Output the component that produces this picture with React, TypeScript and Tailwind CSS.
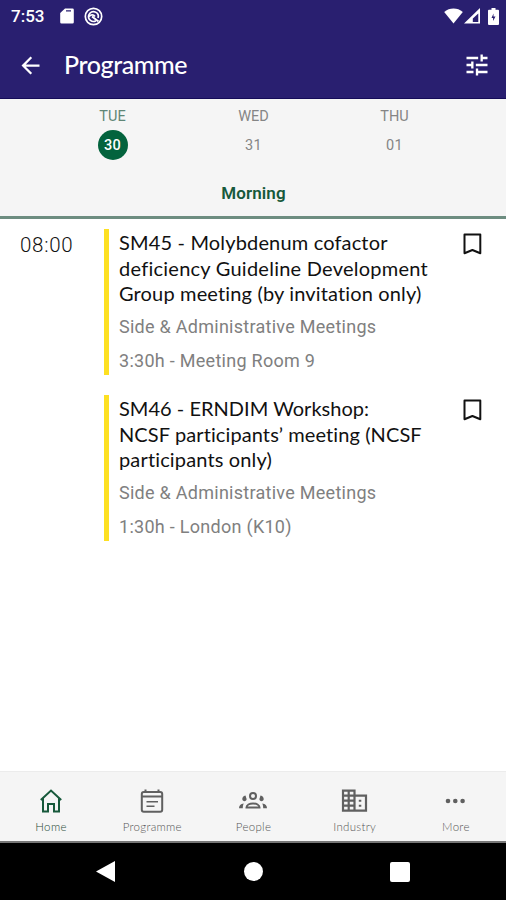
import type { ReactNode } from "react";
import { MdArrowBack, MdTune } from "react-icons/md";

type TitleLine = { text: string; className: string };

const days = [
  { name: "TUE", date: "30", active: true },
  { name: "WED", date: "31", active: false },
  { name: "THU", date: "01", active: false },
];

const sessions: { lines: TitleLine[]; category: string; place: string }[] = [
  {
    lines: [
      { text: "SM45 - Molybdenum cofactor", className: "tracking-[0.160px]" },
      { text: "deficiency Guideline Development", className: "tracking-[0.250px]" },
      { text: "Group meeting (by invitation only)", className: "tracking-[0.150px]" },
    ],
    category: "Side & Administrative Meetings",
    place: "3:30h - Meeting Room 9",
  },
  {
    lines: [
      { text: "SM46 - ERNDIM Workshop:", className: "tracking-[0.020px]" },
      { text: "NCSF participants’ meeting (NCSF", className: "tracking-[0.100px]" },
      { text: "participants only)", className: "tracking-[0.150px]" },
    ],
    category: "Side & Administrative Meetings",
    place: "1:30h - London (K10)",
  },
];

const tabs: { label: string; icon: ReactNode; active?: boolean }[] = [
  {
    label: "Home",
    active: true,
    icon: (
      <path
        strokeWidth="2"
        d="M3.800 13 14 3.500 24.200 13M6 11.500v13h5V17h6v7.500h5v-13"
      />
    ),
  },
  {
    label: "Programme",
    icon: (
      <>
        <rect x="3.800" y="5" width="20.400" height="19.800" rx="2" strokeWidth="2" />
        <path strokeWidth="2" d="M7.500 2.500V5M20.500 2.500V5M4 9.500h20" />
        <path strokeWidth="1.600" d="M8.500 14.800h11.500M8.500 19.300h8" />
      </>
    ),
  },
  {
    label: "People",
    icon: (
      <>
        <circle cx="14" cy="9" r="3" strokeWidth="2" />
        <path strokeWidth="2" d="M7.500 20.500c0-2.500 3-4 6.500-4s6.500 1.500 6.500 4z" />
        <path
          fill="currentColor"
          stroke="none"
          d="M6.500 8.500C4 9 3.300 10.500 3.300 12c0 1.300 1 2.200 2.200 2.200S7.600 13.300 7.600 12zM21.500 8.500c2.500.5 3.200 2 3.200 3.500 0 1.300-1 2.200-2.200 2.200s-2.100-.9-2.100-2.200zM0 21.300c0-2.500 1.500-4.300 4.800-4.700-.8 1.500-1 2.800-1 4.700zM28 21.300c0-2.500-1.500-4.300-4.800-4.700.8 1.500 1 2.800 1 4.700z"
        />
      </>
    ),
  },
  {
    label: "Industry",
    icon: (
      <>
        <path
          strokeWidth="2.200"
          d="M3 3.700h11.500v20H3zM14.500 8.700H26v15H14.500M3 8.700h11.500M3 13.700h11.500M3 18.700h11.500M8.700 3.700v20"
        />
        <path strokeWidth="2" d="M18.800 13.700h2.500M18.800 18.700h2.500" />
      </>
    ),
  },
  {
    label: "More",
    icon: (
      <g fill="currentColor" stroke="none">
        <circle cx="7" cy="14" r="2.300" />
        <circle cx="14.300" cy="14" r="2.300" />
        <circle cx="21.600" cy="14" r="2.300" />
      </g>
    ),
  },
];

function StatusBar() {
  return (
    <div className="flex h-8 items-center pl-[11px] pr-[7px]">
      <span className="w-[49px] text-[17px] font-medium leading-none">7:53</span>
      <svg className="h-4 w-[14px]" viewBox="0 0 14 16" aria-hidden>
        <path
          fill="currentColor"
          fillRule="evenodd"
          d="M5 .5h7.500a1.300 1.300 0 0 1 1.300 1.300v12.400a1.300 1.300 0 0 1-1.300 1.300h-11A1.300 1.300 0 0 1 .2 14.200V5zM6 2.200v1.300h5V2.200z"
        />
      </svg>
      <svg
        className="ml-[10px] h-[19px] w-[19px]"
        viewBox="0 0 19 19"
        fill="none"
        stroke="currentColor"
        aria-hidden
      >
        <circle cx="9.500" cy="9.500" r="8.200" strokeWidth="1.700" />
        <path strokeWidth="1.700" d="M12 13.700A4.900 4.900 0 0 1 4.800 8c1-3 4-4.200 6.500-3 2.500 1 3.500 3.500 2.700 6" />
        <path strokeWidth="1.900" d="M5 9.500C7 7.300 9.500 7.500 11 9.500M8 9.500l6.500 5" />
      </svg>
      <div className="ml-auto flex items-center">
        <svg className="h-4 w-[19px]" viewBox="0 0 19 16" aria-hidden>
          <path fill="currentColor" d="M.2 4C5.500-.6 13.500-.6 18.800 4L9.500 15.500z" />
        </svg>
        <svg className="ml-px h-4 w-4" viewBox="0 0 16 16" aria-hidden>
          <path
            fill="currentColor"
            fillRule="evenodd"
            d="M0 15.500 16 0v15.500zM8.800 14h5.500V5.500L8.800 10.500z"
          />
        </svg>
        <svg className="ml-2 h-[17px] w-[11px]" viewBox="0 0 11 17" aria-hidden>
          <path
            fill="currentColor"
            fillRule="evenodd"
            d="M3.500 0h4v1.800H10a1 1 0 0 1 1 1V16a1 1 0 0 1-1 1H1a1 1 0 0 1-1-1V2.800a1 1 0 0 1 1-1h2.500zM5.500 5.500 3.500 10h1.600v3l2.400-4.500H5.500z"
          />
        </svg>
      </div>
    </div>
  );
}

export default function App() {
  return (
    <div className="flex h-[900px] w-[506px] flex-col overflow-hidden bg-white font-['Roboto',sans-serif]">
      <header className="h-[99px] shrink-0 border-b border-[#150c58] bg-[#291f70] text-white">
        <StatusBar />
        <div className="flex h-[66px] items-center pl-[17px] pr-[15px]">
          <MdArrowBack className="size-[27px]" />
          <h1 className="ml-5 font-['Lato',sans-serif] text-[25px] font-medium tracking-[-0.400px]">
            Programme
          </h1>
          <MdTune className="ml-auto size-[28px]" />
        </div>
      </header>

      <section className="flex h-[120px] shrink-0 flex-col border-b-[3px] border-[#6d8d80] bg-[#f5f5f5]">
        <div className="grid grid-cols-3 pl-[42px] pr-[41px] pt-[9px] text-[#858585]">
          {days.map((day) => (
            <div key={day.name} className="flex flex-col items-center">
              <span
                className={`text-[14.500px] leading-[18px] ${day.active ? "text-[#5f8676]" : ""}`}
              >
                {day.name}
              </span>
              <span
                className={`mt-1 flex size-[30px] items-center justify-center rounded-full pt-[2px] text-[14.500px] tracking-[0.300px] ${
                  day.active ? "bg-[#03633d] font-medium text-white" : ""
                }`}
              >
                {day.date}
              </span>
            </div>
          ))}
        </div>
        <div className="mt-[23px] pl-px text-center text-[17px] font-semibold leading-5 tracking-[0.100px] text-[#17593b]">
          Morning
        </div>
      </section>

      <main className="flex flex-1 pt-[10px]">
        <time className="w-[104px] shrink-0 pl-5 pt-[4px] text-[20.500px] font-light leading-6 tracking-[0.700px] text-[#111]">
          08:00
        </time>
        <div className="flex flex-1 flex-col gap-5">
          {sessions.map((session) => (
            <article
              key={session.place}
              className="flex h-[146px] border-l-[5px] border-[#fde022] pl-[10px]"
            >
              <div className="w-[335px] whitespace-nowrap">
                <h2 className="pt-px font-['Lato',sans-serif] text-[20px] leading-[25.700px] text-[#111]">
                  {session.lines.map((line) => (
                    <span key={line.text} className={`block ${line.className}`}>
                      {line.text}
                    </span>
                  ))}
                </h2>
                <p className="mt-[9px] text-[18px] leading-[22px] tracking-[0.270px] text-[#808080]">
                  {session.category}
                </p>
                <p className="mt-3 text-[18px] leading-[22px] tracking-[0.280px] text-[#808080]">
                  {session.place}
                </p>
              </div>
              <svg
                className="ml-[9px] mt-[4px] h-[22px] w-[19px]"
                viewBox="0 0 19 22"
                fill="none"
                stroke="#111"
                strokeWidth="2"
                strokeLinejoin="round"
                aria-label="Bookmark"
              >
                <path d="M1.500 1.500h15.800v18.700L9.400 17l-7.900 3.200z" />
              </svg>
            </article>
          ))}
        </div>
      </main>

      <nav className="grid h-[70px] shrink-0 grid-cols-5 border-t border-[#ececec] bg-[#f5f5f5] pt-[15px]">
        {tabs.map(({ label, icon, active }) => (
          <div key={label} className="flex flex-col items-center">
            <svg
              className={`size-[28px] ${active ? "text-[#17593b]" : "text-[#606060]"}`}
              viewBox="0 0 28 28"
              fill="none"
              stroke="currentColor"
              aria-hidden
            >
              {icon}
            </svg>
            <span
              className={`mt-[4px] pl-px font-['Lato',sans-serif] text-[11.500px] font-light leading-4 ${
                active ? "tracking-[0.400px] text-[#1f4a35]" : "tracking-[0.300px] text-[#555]"
              }`}
            >
              {label}
            </span>
          </div>
        ))}
      </nav>

      <footer className="flex h-[59px] shrink-0 items-center border-t-2 border-[#777] bg-black pl-[96px] text-white">
        <svg className="h-[21px] w-[19px]" viewBox="0 0 19 21" aria-hidden>
          <path fill="currentColor" d="M19 0v21L0 10.500z" />
        </svg>
        <span className="ml-[129px] size-[19px] rounded-full bg-white" />
        <span className="ml-[127px] size-5 rounded-[2px] bg-white" />
      </footer>
    </div>
  );
}
